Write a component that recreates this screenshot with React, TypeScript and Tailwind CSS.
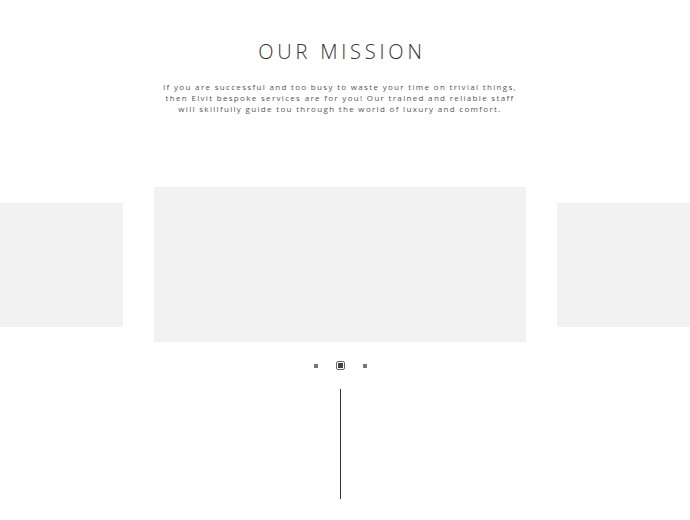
export default function App() {
  return (
    <div className="w-[690px] bg-white h-[520px] overflow-hidden" style={{ fontFamily: '"Open Sans", "Liberation Sans", sans-serif' }}>
      <div className="w-[680px] flex flex-col items-center">
        <h1 className="mt-[40px] text-[20px] leading-[24px] font-light tracking-[0.19em] text-[#333] pl-[0.19em]">OUR MISSION</h1>
        <p className="mt-[17px] text-[8px] leading-[11px] tracking-[0.165em] text-[#555] text-center whitespace-nowrap">
          If you are successful and too busy to waste your time on trivial things,<br />
          then Elvit bespoke services are for you! Our trained and reliable staff<br />
          will skillfully guide tou through the world of luxury and comfort.
        </p>
      </div>
      <div className="mt-[73px] flex justify-center items-center gap-[31px] w-[680px]">
        <div className="w-[372px] h-[124px] shrink-0 bg-[#f2f2f2]" />
        <div className="w-[372px] h-[155px] shrink-0 bg-[#f2f2f2]" />
        <div className="w-[372px] h-[124px] shrink-0 bg-[#f2f2f2]" />
      </div>
      <div className="mt-[19px] flex justify-center items-center gap-[18px] w-[680px]">
        <div className="w-[4px] h-[4px] bg-[#777]" />
        <div className="w-[9px] h-[9px] border border-[#666] rounded-[2px] flex items-center justify-center">
          <div className="w-[5px] h-[5px] bg-[#444]" />
        </div>
        <div className="w-[4px] h-[4px] bg-[#777]" />
      </div>
      <div className="mt-[19px] flex justify-center w-[680px]">
        <div className="w-[1px] h-[110px] bg-[#333]" />
      </div>
    </div>
  );
}
